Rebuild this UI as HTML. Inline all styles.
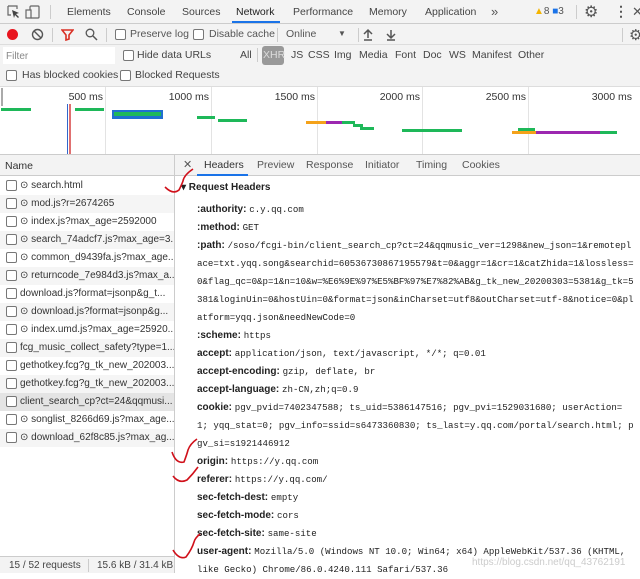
<!DOCTYPE html>
<html><head><meta charset="utf-8"><style>
*{margin:0;padding:0;box-sizing:border-box}
body{width:640px;height:573px;overflow:hidden;background:#fff;font-family:"Liberation Sans",sans-serif;font-size:10px;color:#333;position:relative}
.a{position:absolute;white-space:nowrap}
.cb{position:absolute;width:11px;height:11px;border:1px solid #777;border-radius:2px;background:#fff}
.mono{font-family:"Liberation Mono",monospace;font-size:9.1px;color:#222}
.k{font-weight:bold;color:#222;font-size:10px}
.bar{position:absolute;height:3px}
.d div{height:18px;line-height:18px;overflow:hidden;white-space:nowrap}
.t{font-size:10.5px}
.r{text-align:right;width:60px}
</style></head><body>
<!-- tab bar -->
<div class="a" style="left:0;top:0;width:640px;height:24px;background:#f3f3f3;border-bottom:1px solid #ccc"></div>
<svg class="a" style="left:6px;top:4px" width="40" height="16" viewBox="0 0 40 16"><path d="M2 2h9v3M2 2v9h3" stroke="#666" fill="none" stroke-width="1.2"/><path d="M6 6l7 3-3 1 3 3-1 1-3-3-1 3z" fill="#444"/><rect x="24" y="2" width="9" height="12" rx="1" stroke="#666" fill="none" stroke-width="1.2"/><rect x="20" y="6" width="5" height="8" stroke="#666" fill="#f3f3f3" stroke-width="1.2"/></svg>
<div class="a" style="left:50px;top:5px;width:1px;height:14px;background:#ccc"></div>
<div class="a t" style="left:67px;top:6px;color:#444">Elements</div>
<div class="a t" style="left:127px;top:6px;color:#444">Console</div>
<div class="a t" style="left:182px;top:6px;color:#444">Sources</div>
<div class="a t" style="left:236px;top:6px;color:#222">Network</div>
<div class="a" style="left:232px;top:21px;width:48px;height:2px;background:#1a73e8"></div>
<div class="a t" style="left:293px;top:6px;color:#444">Performance</div>
<div class="a t" style="left:369px;top:6px;color:#444">Memory</div>
<div class="a t" style="left:425px;top:6px;color:#444">Application</div>
<div class="a" style="left:491px;top:4px;font-size:13px;color:#555">»</div>
<div class="a" style="left:534px;top:6px;font-size:10px;color:#555"><span style="color:#f4b400">▲</span>8 <span style="color:#1a73e8">■</span>3</div>
<div class="a" style="left:576px;top:5px;width:1px;height:14px;background:#ccc"></div>
<div class="a" style="left:584px;top:2px;font-size:16px;color:#555">⚙</div>
<div class="a" style="left:614px;top:3px;font-size:14px;color:#555;font-weight:bold">⋮</div>
<div class="a" style="left:632px;top:4px;font-size:13px;color:#555">✕</div>
<!-- toolbar -->
<div class="a" style="left:0;top:24px;width:640px;height:21px;background:#f3f3f3;border-bottom:1px solid #ddd"></div>
<div class="a" style="left:7px;top:29px;width:11px;height:11px;border-radius:50%;background:#e8141e"></div>
<svg class="a" style="left:31px;top:28px" width="13" height="13"><circle cx="6.5" cy="6.5" r="5" stroke="#555" stroke-width="1.4" fill="none"/><path d="M3 3l7 7" stroke="#555" stroke-width="1.4"/></svg>
<div class="a" style="left:52px;top:28px;width:1px;height:14px;background:#ccc"></div>
<svg class="a" style="left:61px;top:28px" width="13" height="13"><path d="M1 2h11l-4 5v4l-3 1v-5z" stroke="#d93025" stroke-width="1.6" fill="none"/></svg>
<svg class="a" style="left:85px;top:28px" width="13" height="13"><circle cx="5" cy="5" r="3.8" stroke="#555" stroke-width="1.3" fill="none"/><path d="M8 8l4 4" stroke="#555" stroke-width="1.5"/></svg>
<div class="a" style="left:106px;top:28px;width:1px;height:14px;background:#ccc"></div>
<div class="cb" style="left:115px;top:29px"></div><div class="a t" style="left:130px;top:28px;color:#555">Preserve log</div>
<div class="cb" style="left:193px;top:29px"></div><div class="a t" style="left:209px;top:28px;color:#555">Disable cache</div>
<div class="a" style="left:277px;top:28px;width:1px;height:14px;background:#ccc"></div>
<div class="a t" style="left:286px;top:28px;color:#555">Online</div>
<div class="a" style="left:338px;top:29px;color:#555;font-size:8px">▼</div>
<div class="a" style="left:358px;top:28px;width:1px;height:14px;background:#ccc"></div>
<svg class="a" style="left:363px;top:28px" width="36" height="14"><path d="M5 2v8M1 6l4-4 4 4M1 12h8" stroke="#555" stroke-width="1.5" fill="none"/><path d="M28 2v8M24 6l4 4 4-4M24 12h8" stroke="#555" stroke-width="1.5" fill="none"/></svg>
<div class="a" style="left:622px;top:28px;width:1px;height:14px;background:#ccc"></div>
<div class="a" style="left:629px;top:26px;font-size:15px;color:#555">⚙</div>
<!-- filter row -->
<div class="a" style="left:0;top:45px;width:640px;height:41px;background:#f3f3f3"></div>
<div class="a" style="left:3px;top:47px;width:112px;height:17px;background:#fff"></div>
<div class="a" style="left:6px;top:51px;color:#888;font-size:10px">Filter</div>
<div class="cb" style="left:123px;top:50px"></div><div class="a t" style="left:137px;top:49px;color:#444">Hide data URLs</div>
<div class="a t" style="left:240px;top:49px;color:#444">All</div>
<div class="a" style="left:257px;top:48px;width:1px;height:14px;background:#ccc"></div>
<div class="a" style="left:262px;top:46px;width:22px;height:19px;background:#999;border-radius:3px;color:#ddd;font-size:10.5px;padding:3px 1px">XHR</div>
<div class="a t" style="left:291px;top:49px;color:#444">JS</div>
<div class="a t" style="left:308px;top:49px;color:#444">CSS</div>
<div class="a t" style="left:334px;top:49px;color:#444">Img</div>
<div class="a t" style="left:359px;top:49px;color:#444">Media</div>
<div class="a t" style="left:395px;top:49px;color:#444">Font</div>
<div class="a t" style="left:423px;top:49px;color:#444">Doc</div>
<div class="a t" style="left:449px;top:49px;color:#444">WS</div>
<div class="a t" style="left:472px;top:49px;color:#444">Manifest</div>
<div class="a t" style="left:518px;top:49px;color:#444">Other</div>
<div class="cb" style="left:6px;top:70px"></div><div class="a t" style="left:22px;top:69px;color:#444">Has blocked cookies</div>
<div class="cb" style="left:120px;top:70px"></div><div class="a t" style="left:135px;top:69px;color:#444">Blocked Requests</div>
<!-- overview -->
<div class="a" style="left:0;top:86px;width:640px;height:69px;background:#fff;border-top:1px solid #ddd;border-bottom:1px solid #ccc"></div>
<div class="a" style="left:1px;top:88px;width:2px;height:18px;background:#aaa"></div>
<div class="a" style="left:105px;top:87px;width:1px;height:67px;background:#e3e3e3"></div>
<div class="a" style="left:211px;top:87px;width:1px;height:67px;background:#e3e3e3"></div>
<div class="a" style="left:317px;top:87px;width:1px;height:67px;background:#e3e3e3"></div>
<div class="a" style="left:422px;top:87px;width:1px;height:67px;background:#e3e3e3"></div>
<div class="a" style="left:528px;top:87px;width:1px;height:67px;background:#e3e3e3"></div>
<div class="a t r" style="left:43px;top:91px;color:#333">500 ms</div>
<div class="a t r" style="left:149px;top:91px;color:#333">1000 ms</div>
<div class="a t r" style="left:255px;top:91px;color:#333">1500 ms</div>
<div class="a t r" style="left:360px;top:91px;color:#333">2000 ms</div>
<div class="a t r" style="left:466px;top:91px;color:#333">2500 ms</div>
<div class="a t r" style="left:572px;top:91px;color:#333">3000 ms</div>
<div class="bar" style="left:1px;top:108px;width:30px;background:#1eb859"></div>
<div class="bar" style="left:75px;top:108px;width:29px;background:#1eb859"></div>
<div class="a" style="left:67px;top:104px;width:1px;height:50px;background:#3366cc"></div>
<div class="a" style="left:69px;top:104px;width:2px;height:50px;background:#e07070"></div>
<div class="a" style="left:112px;top:110px;width:51px;height:9px;background:#1f6fd0"></div>
<div class="a" style="left:114px;top:112px;width:47px;height:4px;background:#1eb859"></div>
<div class="bar" style="left:197px;top:116px;width:18px;background:#1eb859"></div>
<div class="bar" style="left:218px;top:119px;width:29px;background:#1eb859"></div>
<div class="bar" style="left:306px;top:121px;width:20px;background:#f4a21a"></div>
<div class="bar" style="left:326px;top:121px;width:16px;background:#9c27b0"></div>
<div class="bar" style="left:342px;top:121px;width:13px;background:#1eb859"></div>
<div class="bar" style="left:353px;top:124px;width:10px;background:#1eb859"></div>
<div class="bar" style="left:360px;top:127px;width:14px;background:#1eb859"></div>
<div class="bar" style="left:402px;top:129px;width:60px;background:#1eb859"></div>
<div class="bar" style="left:518px;top:128px;width:17px;background:#1eb859"></div>
<div class="bar" style="left:512px;top:131px;width:24px;background:#f4a21a"></div>
<div class="bar" style="left:536px;top:131px;width:64px;background:#9c27b0"></div>
<div class="bar" style="left:600px;top:131px;width:17px;background:#1eb859"></div>
<!-- left list -->
<div class="a" style="left:0;top:155px;width:175px;height:21px;background:#f3f3f3;border-bottom:1px solid #ccc"></div>
<div class="a t" style="left:5px;top:160px;color:#333">Name</div>
<div class="a" style="left:174px;top:155px;width:1px;height:418px;background:#ccc"></div>
<div class="a" style="left:0;top:177px;width:174px;overflow:hidden;font-size:10px">
<div style="height:18px;position:relative;background:#fff"><div class="cb" style="left:6px;top:3px"></div><span class="a" style="left:20px;top:3px">⊙ search.html</span></div>
<div style="height:18px;position:relative;background:#f5f5f5"><div class="cb" style="left:6px;top:3px"></div><span class="a" style="left:20px;top:3px">⊙ mod.js?r=2674265</span></div>
<div style="height:18px;position:relative;background:#fff"><div class="cb" style="left:6px;top:3px"></div><span class="a" style="left:20px;top:3px">⊙ index.js?max_age=2592000</span></div>
<div style="height:18px;position:relative;background:#f5f5f5"><div class="cb" style="left:6px;top:3px"></div><span class="a" style="left:20px;top:3px">⊙ search_74adcf7.js?max_age=3...</span></div>
<div style="height:18px;position:relative;background:#fff"><div class="cb" style="left:6px;top:3px"></div><span class="a" style="left:20px;top:3px">⊙ common_d9439fa.js?max_age...</span></div>
<div style="height:18px;position:relative;background:#f5f5f5"><div class="cb" style="left:6px;top:3px"></div><span class="a" style="left:20px;top:3px">⊙ returncode_7e984d3.js?max_a...</span></div>
<div style="height:18px;position:relative;background:#fff"><div class="cb" style="left:6px;top:3px"></div><span class="a" style="left:20px;top:3px">download.js?format=jsonp&amp;g_t...</span></div>
<div style="height:18px;position:relative;background:#f5f5f5"><div class="cb" style="left:6px;top:3px"></div><span class="a" style="left:20px;top:3px">⊙ download.js?format=jsonp&amp;g...</span></div>
<div style="height:18px;position:relative;background:#fff"><div class="cb" style="left:6px;top:3px"></div><span class="a" style="left:20px;top:3px">⊙ index.umd.js?max_age=25920...</span></div>
<div style="height:18px;position:relative;background:#f5f5f5"><div class="cb" style="left:6px;top:3px"></div><span class="a" style="left:20px;top:3px">fcg_music_collect_safety?type=1...</span></div>
<div style="height:18px;position:relative;background:#fff"><div class="cb" style="left:6px;top:3px"></div><span class="a" style="left:20px;top:3px">gethotkey.fcg?g_tk_new_202003...</span></div>
<div style="height:18px;position:relative;background:#f5f5f5"><div class="cb" style="left:6px;top:3px"></div><span class="a" style="left:20px;top:3px">gethotkey.fcg?g_tk_new_202003...</span></div>
<div style="height:18px;position:relative;background:#e4e4e4"><div class="cb" style="left:6px;top:3px"></div><span class="a" style="left:20px;top:3px">client_search_cp?ct=24&amp;qqmusi...</span></div>
<div style="height:18px;position:relative;background:#fff"><div class="cb" style="left:6px;top:3px"></div><span class="a" style="left:20px;top:3px">⊙ songlist_8266d69.js?max_age...</span></div>
<div style="height:18px;position:relative;background:#f5f5f5"><div class="cb" style="left:6px;top:3px"></div><span class="a" style="left:20px;top:3px">⊙ download_62f8c85.js?max_ag...</span></div>
</div>
<!-- status bar -->
<div class="a" style="left:0;top:556px;width:174px;height:17px;background:#f3f3f3;border-top:1px solid #ccc"></div>
<div class="a" style="left:9px;top:560px;color:#444;font-size:10px">15 / 52 requests</div>
<div class="a" style="left:88px;top:559px;width:1px;height:13px;background:#ccc"></div>
<div class="a" style="left:97px;top:560px;color:#444;font-size:10px">15.6 kB / 31.4 kB</div>
<!-- right panel tabs -->
<div class="a" style="left:175px;top:155px;width:465px;height:21px;background:#f3f3f3;border-bottom:1px solid #ccc"></div>
<div class="a" style="left:183px;top:158px;color:#555;font-size:11px">✕</div>
<div class="a t" style="left:204px;top:159px;color:#333">Headers</div>
<div class="a" style="left:197px;top:174px;width:51px;height:2px;background:#1a73e8"></div>
<div class="a t" style="left:257px;top:159px;color:#555">Preview</div>
<div class="a t" style="left:306px;top:159px;color:#555">Response</div>
<div class="a t" style="left:365px;top:159px;color:#555">Initiator</div>
<div class="a t" style="left:416px;top:159px;color:#555">Timing</div>
<div class="a t" style="left:462px;top:159px;color:#555">Cookies</div>
<!-- details -->
<div class="a" style="left:181px;top:182px;color:#222;font-weight:bold;font-size:10px">▾ Request Headers</div>
<div class="a d" style="left:197px;top:201px;width:443px">
<div><span class="k">:authority:</span> <span class="mono">c.y.qq.com</span></div>
<div><span class="k">:method:</span> <span class="mono">GET</span></div>
<div><span class="k">:path:</span> <span class="mono">/soso/fcgi-bin/client_search_cp?ct=24&amp;qqmusic_ver=1298&amp;new_json=1&amp;remotepl</span></div>
<div class="mono">ace=txt.yqq.song&amp;searchid=60536730867195579&amp;t=0&amp;aggr=1&amp;cr=1&amp;catZhida=1&amp;lossless=</div>
<div class="mono">0&amp;flag_qc=0&amp;p=1&amp;n=10&amp;w=%E6%9E%97%E5%BF%97%E7%82%AB&amp;g_tk_new_20200303=5381&amp;g_tk=5</div>
<div class="mono">381&amp;loginUin=0&amp;hostUin=0&amp;format=json&amp;inCharset=utf8&amp;outCharset=utf-8&amp;notice=0&amp;pl</div>
<div class="mono">atform=yqq.json&amp;needNewCode=0</div>
<div><span class="k">:scheme:</span> <span class="mono">https</span></div>
<div><span class="k">accept:</span> <span class="mono">application/json, text/javascript, */*; q=0.01</span></div>
<div><span class="k">accept-encoding:</span> <span class="mono">gzip, deflate, br</span></div>
<div><span class="k">accept-language:</span> <span class="mono">zh-CN,zh;q=0.9</span></div>
<div><span class="k">cookie:</span> <span class="mono">pgv_pvid=7402347588; ts_uid=5386147516; pgv_pvi=1529031680; userAction=</span></div>
<div class="mono">1; yqq_stat=0; pgv_info=ssid=s6473360830; ts_last=y.qq.com/portal/search.html; p</div>
<div class="mono">gv_si=s1921446912</div>
<div><span class="k">origin:</span> <span class="mono">https://y.qq.com</span></div>
<div><span class="k">referer:</span> <span class="mono">https://y.qq.com/</span></div>
<div><span class="k">sec-fetch-dest:</span> <span class="mono">empty</span></div>
<div><span class="k">sec-fetch-mode:</span> <span class="mono">cors</span></div>
<div><span class="k">sec-fetch-site:</span> <span class="mono">same-site</span></div>
<div><span class="k">user-agent:</span> <span class="mono">Mozilla/5.0 (Windows NT 10.0; Win64; x64) AppleWebKit/537.36 (KHTML,</span></div>
<div class="mono">like Gecko) Chrome/86.0.4240.111 Safari/537.36</div>
</div>
<div class="a" style="left:472px;top:557px;color:#ccc;font-size:10px">https://blog.csdn.net/qq_43762191</div>
<!-- red checkmarks -->
<svg class="a" style="left:0;top:0" width="640" height="573"><g stroke="#d0101a" stroke-width="1.6" fill="none"><path d="M165 187q8 8 14 3 3-6 4-9 1-6 10-12"/><path d="M172 452q4 12 12 10 3-8 4-12 2-6 9-11"/><path d="M173 476q6 8 14 4 6-6 11-13"/><path d="M173 550q6 10 13 7 6-8 8-15 1-4 6-8"/></g></svg>
</body></html>
